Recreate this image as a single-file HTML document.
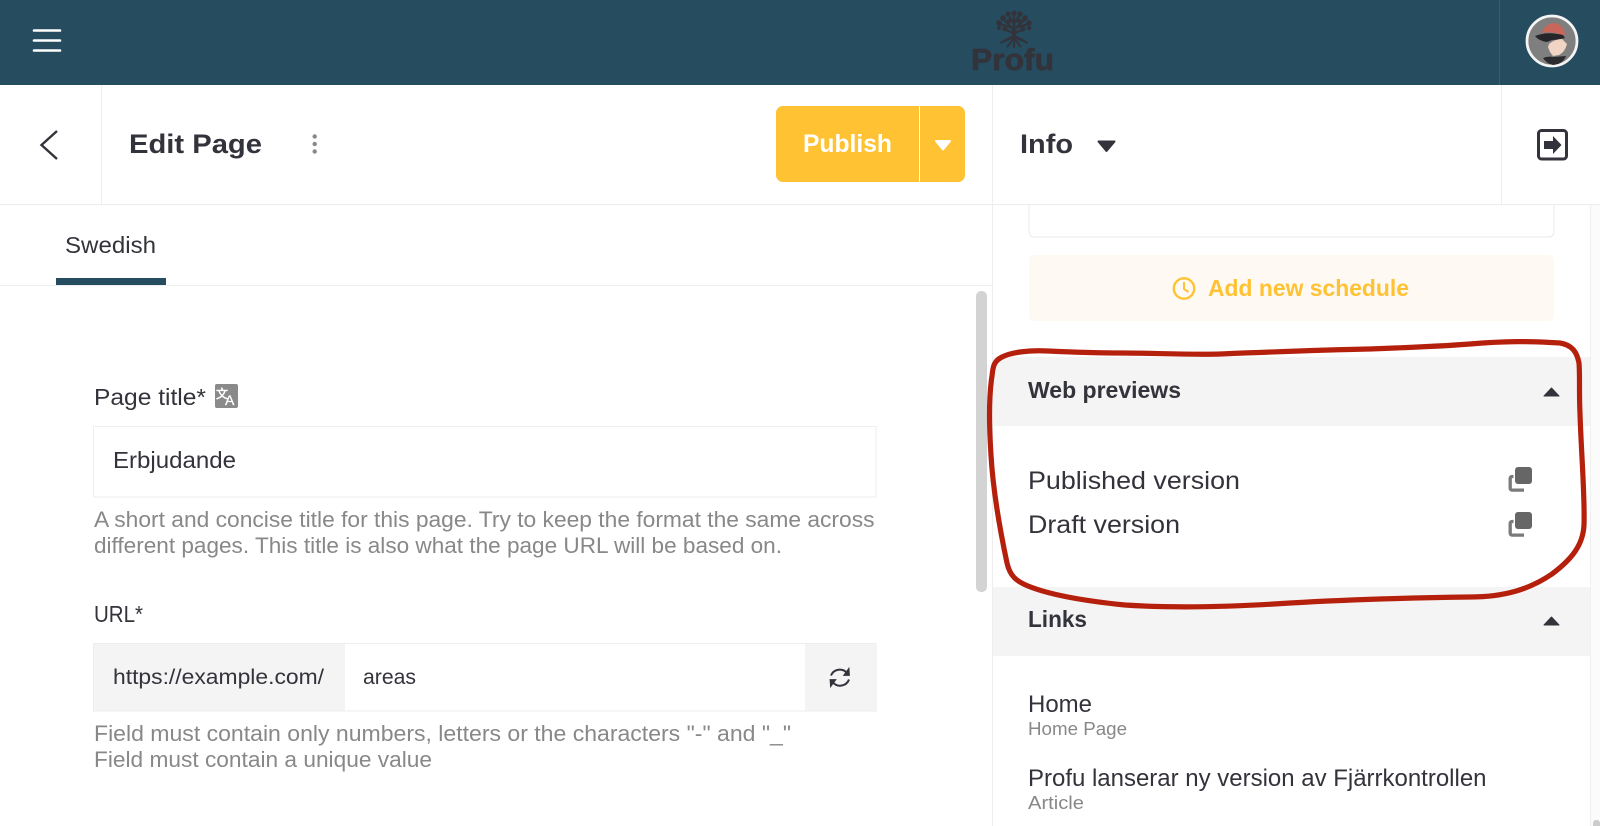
<!DOCTYPE html>
<html><head><meta charset="utf-8"><title>Edit Page</title>
<style>html,body{margin:0;padding:0;background:#fff;width:1600px;height:826px;overflow:hidden}svg{display:block}text{font-family:"Liberation Sans","Noto Sans CJK SC",sans-serif;fill:#33333b}.b{font-weight:700}.g{fill:#888}</style></head>
<body>
<svg width="1600" height="826" viewBox="0 0 1600 826" xmlns="http://www.w3.org/2000/svg">
<rect width="1600" height="826" fill="#fff"/>
<!-- right panel content -->
<rect x="1029" y="180" width="525" height="57" rx="5" fill="#fff" stroke="#eee" stroke-width="1.2"/>
<rect x="1029" y="255" width="525" height="66" rx="5" fill="#fef9f3"/>
<circle cx="1184" cy="288.5" r="10.2" fill="none" stroke="#ffc233" stroke-width="2.4"/>
<path d="M1184 282v7l4.5 3" fill="none" stroke="#ffc233" stroke-width="2"/>
<text x="1208" y="296" class="b" font-size="23" style="fill:#ffc233" textLength="201" lengthAdjust="spacingAndGlyphs">Add new schedule</text>
<rect x="993" y="357" width="597" height="69" fill="#f4f4f4"/>
<text x="1028" y="398" class="b" font-size="23" textLength="153" lengthAdjust="spacingAndGlyphs">Web previews</text>
<path d="M1544 396l7.500-8 7.500 8z" fill="#33333b" stroke="#33333b" stroke-linejoin="round"/>
<text x="1028" y="489" font-size="25" textLength="212" lengthAdjust="spacingAndGlyphs">Published version</text>
<text x="1028" y="533" font-size="25" textLength="152" lengthAdjust="spacingAndGlyphs">Draft version</text>
<g><rect x="1515" y="467" width="17" height="17" rx="3" fill="#666"/><path d="M1513.500 476.500h-1.500a1.800 1.800 0 0 0-1.800 1.800v10a1.800 1.800 0 0 0 1.800 1.800h12" fill="none" stroke="#7a7a7a" stroke-width="3.300"/></g>
<g transform="translate(0 45)"><rect x="1515" y="467" width="17" height="17" rx="3" fill="#666"/><path d="M1513.500 476.500h-1.500a1.800 1.800 0 0 0-1.800 1.800v10a1.800 1.800 0 0 0 1.800 1.800h12" fill="none" stroke="#7a7a7a" stroke-width="3.300"/></g>
<rect x="993" y="587" width="597" height="69" fill="#f4f4f4"/>
<text x="1028" y="627" class="b" font-size="23" textLength="59" lengthAdjust="spacingAndGlyphs">Links</text>
<path d="M1544 625l7.500-8 7.500 8z" fill="#33333b" stroke="#33333b" stroke-linejoin="round"/>
<text x="1028" y="712" font-size="24" textLength="64" lengthAdjust="spacingAndGlyphs">Home</text>
<text x="1028" y="735" font-size="18.500" class="g" textLength="99" lengthAdjust="spacingAndGlyphs">Home Page</text>
<text x="1028" y="786" font-size="24" textLength="458.500" lengthAdjust="spacingAndGlyphs">Profu lanserar ny version av Fjärrkontrollen</text>
<text x="1028" y="809" font-size="18.500" class="g" textLength="56" lengthAdjust="spacingAndGlyphs">Article</text>
<!-- right scrollbar -->
<rect x="1590" y="204" width="10" height="622" fill="#fbfbfb"/>
<rect x="1590" y="204" width="1" height="622" fill="#f0f0f0"/>
<rect x="1593" y="820" width="7" height="10" rx="3" fill="#ccc"/>
<!-- header -->
<rect width="1600" height="85" fill="#254c5f"/>
<path d="M34 30.500h26M34 40.500h26M34 50.500h26" stroke="#fff" stroke-width="2.600" stroke-linecap="round"/>
<rect x="1499" y="0" width="1" height="85" fill="#3d5c6c"/>
<!-- logo -->
<g fill="#33333b">
<g fill="none" stroke="#33333b" stroke-width="2.200">
<path d="M1014 34V14M1014 30L1003 19M1014 30L1025 19M1014 28L999 24M1014 28L1029 24M1014 33L1003 29M1014 33L1025 29M1014 24L1008 14M1014 24L1020 14"/>
<path d="M1014 38V28" stroke-width="4.500"/>
<path d="M1014 36L1003 41M1014 36L1025 41M1014 38L1007 47M1014 38L1021 47M1014 38V48M1014 37L1000 43M1014 37L1028 43" stroke-width="2"/>
</g>
<circle cx="1014" cy="13" r="2.600"/><circle cx="1008" cy="14" r="2.600"/><circle cx="1020" cy="14" r="2.600"/><circle cx="1003" cy="18" r="2.800"/><circle cx="1025" cy="18" r="2.800"/><circle cx="999" cy="23" r="2.800"/><circle cx="1029" cy="23" r="2.800"/><circle cx="999" cy="28" r="2.200"/><circle cx="1029" cy="28" r="2.200"/><circle cx="1005" cy="29" r="2.400"/><circle cx="1023" cy="29" r="2.400"/><circle cx="1009" cy="21" r="2.400"/><circle cx="1019" cy="21" r="2.400"/>
</g>
<text x="971" y="70" class="b" font-size="31" stroke="#33333b" stroke-width=".7" textLength="83" lengthAdjust="spacingAndGlyphs">Profu</text>
<!-- avatar -->
<circle cx="1552" cy="41" r="25" fill="#7f7f7f" stroke="#f4f4f4" stroke-width="2.800"/>
<path d="M1542 33q2-9 12-10 8 1 11 10l-1 3q-11-5-22-3z" fill="#c9665c"/>
<path d="M1535 36q12-5 28-1l2 3q-8 2-13 2l-5 2q-8-1-12-6z" fill="#25252a"/>
<path d="M1549 44q6-5 13-5l5 5q-2 8-8 11l-6 1-3-4-2-5z" fill="#f0d5c4"/>
<path d="M1543 58q5-2 10-1l13-1q-3 8-13 9-6-1-10-7z" fill="#2b2b2e"/>
<!-- subheader -->
<rect x="0" y="85" width="1600" height="119" fill="#fff"/>
<rect x="0" y="204" width="1600" height="1.200" fill="#eee"/>
<rect x="101" y="85" width="1" height="119" fill="#eee"/>
<rect x="992" y="85" width="1" height="741" fill="#eee"/>
<rect x="1501" y="85" width="1" height="119" fill="#eee"/>
<path d="M57 131l-15.500 14 15.500 14" fill="none" stroke="#33333b" stroke-width="2.400"/>
<text x="129" y="153" class="b" font-size="27" textLength="133" lengthAdjust="spacingAndGlyphs">Edit Page</text>
<circle cx="314.700" cy="136.500" r="2.200" fill="#888"/><circle cx="314.700" cy="144" r="2.200" fill="#888"/><circle cx="314.700" cy="151.500" r="2.200" fill="#888"/>
<rect x="776" y="106" width="189" height="76" rx="7" fill="#ffc233"/>
<rect x="919" y="106" width="1" height="76" fill="#fff"/>
<text x="803" y="152" class="b" font-size="25" style="fill:#fff" textLength="89" lengthAdjust="spacingAndGlyphs">Publish</text>
<path d="M936 141h14l-7 8.500z" fill="#fff" stroke="#fff" stroke-width="2" stroke-linejoin="round"/>
<text x="1020" y="153" class="b" font-size="27" textLength="53" lengthAdjust="spacingAndGlyphs">Info</text>
<path d="M1098.500 141.500h16l-8 9.500z" fill="#33333b" stroke="#33333b" stroke-width="2" stroke-linejoin="round"/>
<rect x="1538.500" y="130.500" width="28" height="28.500" rx="3" fill="none" stroke="#33333b" stroke-width="3"/>
<path d="M1544 141h9v-5l8.500 9-8.500 9v-5h-9z" fill="#33333b"/>
<!-- tabs -->
<text x="65" y="253" font-size="23.500" textLength="91" lengthAdjust="spacingAndGlyphs">Swedish</text>
<rect x="0" y="285" width="992" height="1" fill="#eee"/>
<rect x="56" y="278" width="110" height="7" fill="#254c5f"/>
<!-- scrollbar left -->
<rect x="976" y="291" width="11" height="301" rx="5" fill="#d3d3d3"/>
<!-- form -->
<text x="94" y="405" font-size="23" textLength="112" lengthAdjust="spacingAndGlyphs">Page title*</text>
<rect x="215" y="384" width="23" height="24" rx="2" fill="#8a8a8a"/>
<text x="216" y="398" font-size="12" style="fill:#fff" stroke="#fff" stroke-width=".5">文</text>
<text x="225" y="405" font-size="14" style="fill:#fff" stroke="#fff" stroke-width=".3">A</text>
<rect x="93.500" y="426.500" width="782.500" height="70.500" fill="#fff" stroke="#eee"/>
<text x="113" y="468" font-size="23" textLength="123" lengthAdjust="spacingAndGlyphs">Erbjudande</text>
<text x="94" y="527" font-size="22" class="g" textLength="780.500" lengthAdjust="spacingAndGlyphs">A short and concise title for this page. Try to keep the format the same across</text>
<text x="94" y="553" font-size="22" class="g" textLength="688" lengthAdjust="spacingAndGlyphs">different pages. This title is also what the page URL will be based on.</text>
<text x="94" y="622" font-size="23" textLength="49" lengthAdjust="spacingAndGlyphs">URL*</text>
<rect x="93.500" y="643.500" width="782.500" height="67.500" fill="#fff" stroke="#eee"/>
<rect x="94" y="644" width="251" height="66.500" fill="#f4f4f4"/>
<rect x="805" y="644" width="70.500" height="66.500" fill="#f4f4f4"/>
<text x="113" y="684" font-size="21" textLength="211" lengthAdjust="spacingAndGlyphs">https://example.com/</text>
<text x="363" y="684" font-size="21" textLength="53" lengthAdjust="spacingAndGlyphs">areas</text>
<g fill="none" stroke="#33333b" stroke-width="2">
<path d="M831 675.500a9.500 9.500 0 0 1 16-2.500"/><path d="M849 668l.5 7.500h-6z" fill="#33333b" stroke-width=".8"/>
<path d="M849 679.500a9.500 9.500 0 0 1-16 3"/><path d="M830.500 687l-.5-7.500h6z" fill="#33333b" stroke-width=".8"/>
</g>
<text x="94" y="741" font-size="22" class="g" textLength="697" lengthAdjust="spacingAndGlyphs">Field must contain only numbers, letters or the characters "-" and "_"</text>
<text x="94" y="767" font-size="22" class="g" textLength="338" lengthAdjust="spacingAndGlyphs">Field must contain a unique value</text>
<!-- red annotation -->
<path d="M1048 351C1030 350 1012 352 1002 357C994 361 993 366 992 376C989 395 989 425 991 455C993 490 1000 530 1007 563C1010 576 1016 581 1028 586C1050 595 1085 601 1125 605C1170 608 1230 607 1290 603C1340 600 1400 598 1470 597C1505 597 1530 589 1552 574C1572 559 1583 545 1584 525C1585 495 1581 450 1580 413C1579 395 1580 375 1579 363C1577 352 1572 345 1560 343C1530 341 1505 341 1470 344C1430 347 1395 348 1368 349C1320 350 1270 352 1221 354C1190 355 1150 353 1123 353C1095 353 1070 352 1048 351Z" fill="none" stroke="#b5200d" stroke-width="5.200" stroke-linejoin="round"/>
</svg>
</body></html>
